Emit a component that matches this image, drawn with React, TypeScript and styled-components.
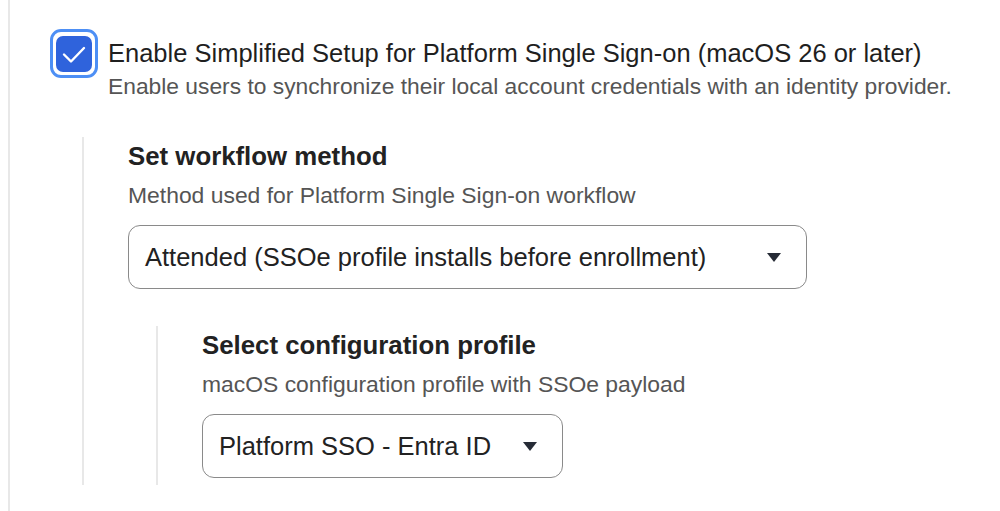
import React from 'react';
import styled, { createGlobalStyle } from 'styled-components';

const GlobalStyle = createGlobalStyle`
	html, body {
		margin: 0;
		padding: 0;
		background: #ffffff;
		font-family: 'Liberation Sans', Arial, sans-serif;
		color: #222222;
	}
`;

const Page = styled.div`
	width: 1000px;
	height: 511px;
	overflow: hidden;
	box-sizing: border-box;
	padding-left: 8px;
`;

const Rail = styled.div`
	height: 100%;
	border-left: 2px solid #e8e8e8;
	padding: 29px 0 0 40px;
	box-sizing: border-box;
`;

const OptionRow = styled.label`
	display: flex;
	align-items: flex-start;
	gap: 10px;
`;

const CheckRing = styled.span`
	display: flex;
	align-items: center;
	justify-content: center;
	width: 48px;
	height: 49px;
	box-sizing: border-box;
	border: 3px solid #4d8ff5;
	border-radius: 11px;
	flex-shrink: 0;
`;

const CheckBox = styled.span`
	display: flex;
	width: 36px;
	height: 36px;
	border-radius: 7px;
	background: #2f63dc;
`;

const OptionText = styled.div`
	padding-top: 9px;
	white-space: nowrap;
`;

const OptionTitle = styled.div`
	font-size: 25.5px;
	line-height: 30px;
	color: #1f1f1f;
`;

const OptionHint = styled.div`
	font-size: 22.8px;
	line-height: 28px;
	color: #555555;
	margin-top: 4px;
`;

const Nested = styled.div<{ $top: number; $indent: number; $height: number }>`
	margin-top: ${({ $top }) => $top}px;
	margin-left: ${({ $indent }) => $indent}px;
	border-left: 2px solid #e8e8e8;
	padding-left: 44px;
	padding-top: 4px;
	height: ${({ $height }) => $height}px;
	box-sizing: border-box;
`;

const FieldTitle = styled.div`
	font-size: 25.8px;
	font-weight: 700;
	line-height: 30px;
	color: #222222;
	white-space: nowrap;
`;

const FieldHint = styled.div`
	font-size: 22.9px;
	line-height: 28px;
	color: #555555;
	margin-top: 10px;
	white-space: nowrap;
`;

const Select = styled.div<{ $width: number }>`
	display: flex;
	align-items: center;
	justify-content: space-between;
	width: ${({ $width }) => $width}px;
	height: 64px;
	margin-top: 16px;
	box-sizing: border-box;
	border: 1.5px solid #8a8a8a;
	border-radius: 12px;
	padding: 0 25px 0 16px;
	font-size: 25.5px;
	color: #222222;
	white-space: nowrap;
`;

const Caret = () => (
	<svg width="14" height="9" viewBox="0 0 14 9">
		<path d="M0 0 H14 L7 9 Z" fill="#262b36" />
	</svg>
);

const App = () => {
	return (
		<>
			<GlobalStyle />
			<Page>
				<Rail>
					<OptionRow>
						<CheckRing>
							<CheckBox>
								<svg width="36" height="36" viewBox="0 0 36 36">
									<path d="M8 18.5 L15 25.5 L28 12" fill="none" stroke="#ffffff" strokeWidth="2.4" strokeLinecap="round" strokeLinejoin="round" />
								</svg>
							</CheckBox>
						</CheckRing>
						<OptionText>
							<OptionTitle>Enable Simplified Setup for Platform Single Sign-on (macOS 26 or later)</OptionTitle>
							<OptionHint>Enable users to synchronize their local account credentials with an identity provider.</OptionHint>
						</OptionText>
					</OptionRow>
					<Nested $top={37} $indent={32} $height={348}>
						<FieldTitle>Set workflow method</FieldTitle>
						<FieldHint>Method used for Platform Single Sign-on workflow</FieldHint>
						<Select $width={679}>
							Attended (SSOe profile installs before enrollment)
							<Caret />
						</Select>
						<Nested $top={37} $indent={28} $height={159}>
							<FieldTitle>Select configuration profile</FieldTitle>
							<FieldHint>macOS configuration profile with SSOe payload</FieldHint>
							<Select $width={361}>
								Platform SSO - Entra ID
								<Caret />
							</Select>
						</Nested>
					</Nested>
				</Rail>
			</Page>
		</>
	);
};

export default App;
